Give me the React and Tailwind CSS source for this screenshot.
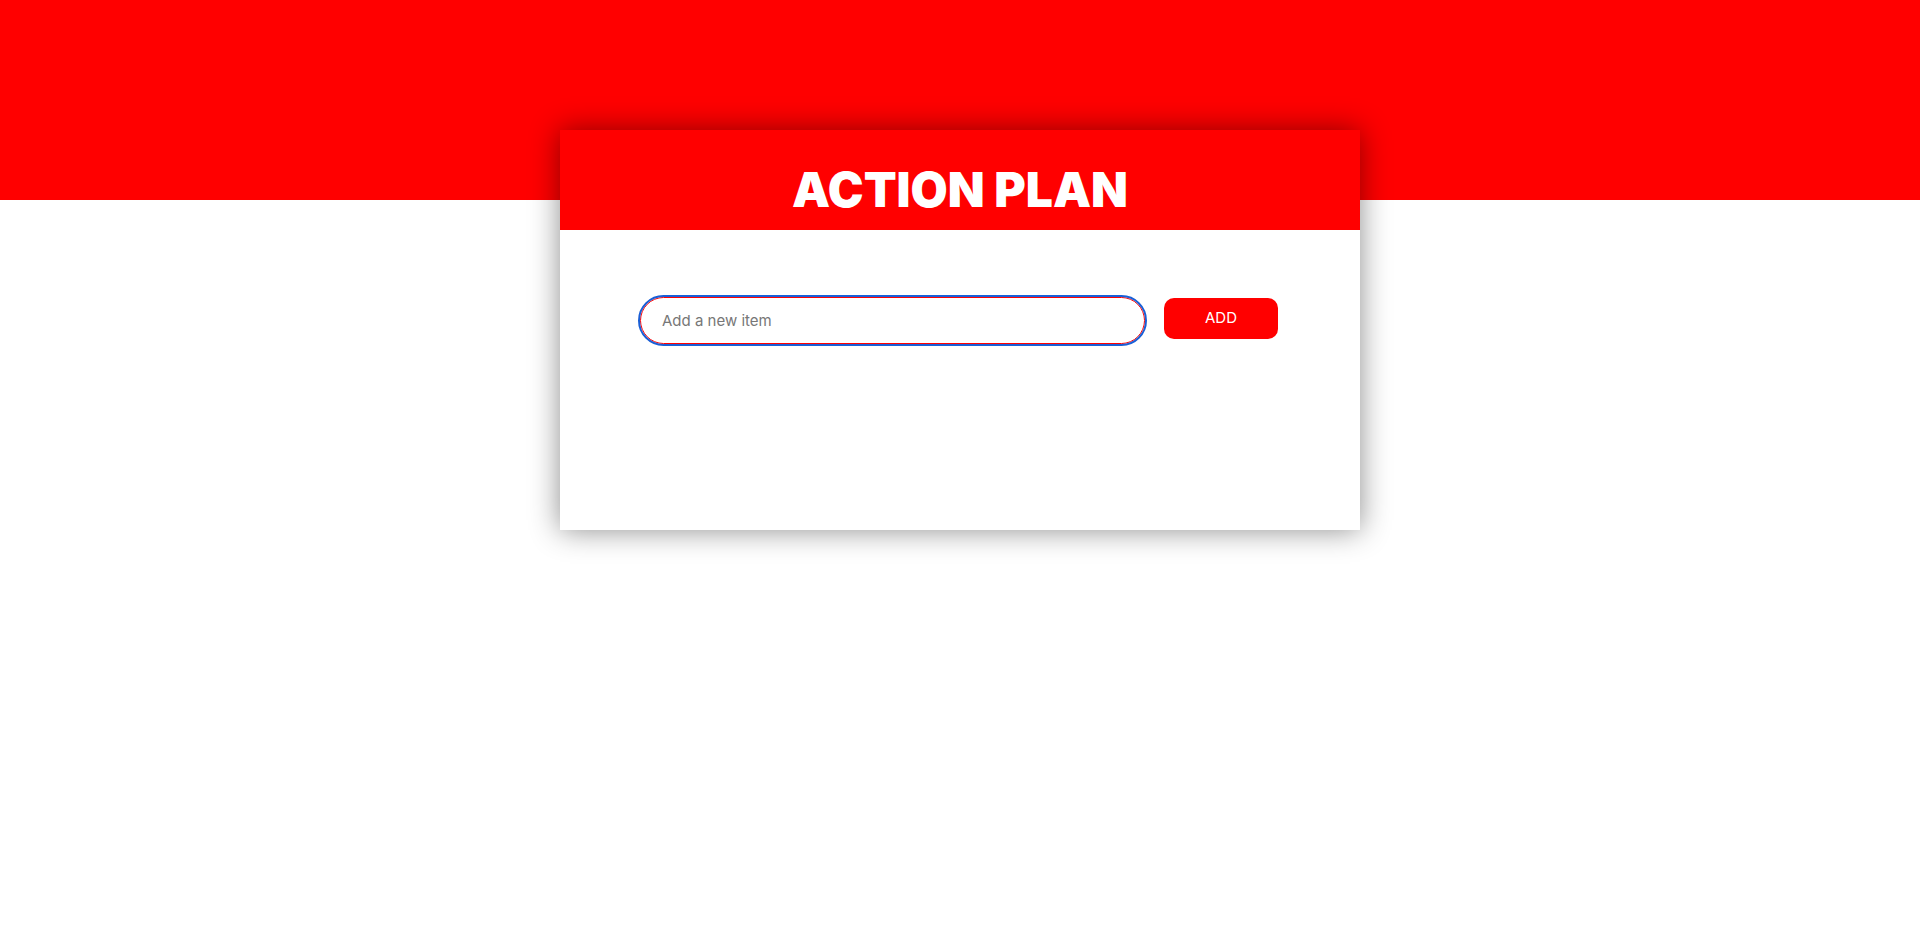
import React, { useState } from "react";

const App = () => {
  const [item, setItem] = useState("");

  return (
    <div className="min-h-[947px] bg-[linear-gradient(#ff0000_200px,#ffffff_200px)] pt-[130px] font-['Inter',sans-serif]">
      <div className="mx-auto w-[800px] bg-white shadow-[0_0_28px_rgba(0,0,0,0.45)]">
        <div className="flex h-[100px] items-end justify-center bg-[#ff0000] pb-[16px]">
          <h1 className="text-[48px] font-black leading-none text-white">
            ACTION PLAN
          </h1>
        </div>

        <div className="flex h-[300px] items-start gap-[19px] px-[80px] pt-[66px]">
          <input
            autoFocus
            value={item}
            onChange={(e) => setItem(e.target.value)}
            placeholder="Add a new item"
            className="mt-px h-[47px] w-[505px] rounded-[24px] border border-[#ff0000] px-[21px] text-[15px] text-[#333] outline-2 outline-offset-0 outline-[#1a5fd6] placeholder:text-[#777]"
          />
          <button className="mt-[2px] h-[41px] w-[114px] rounded-[10px] bg-[#ff0000] text-[15px] text-white">
            ADD
          </button>
        </div>
      </div>
    </div>
  );
};

export default App;
